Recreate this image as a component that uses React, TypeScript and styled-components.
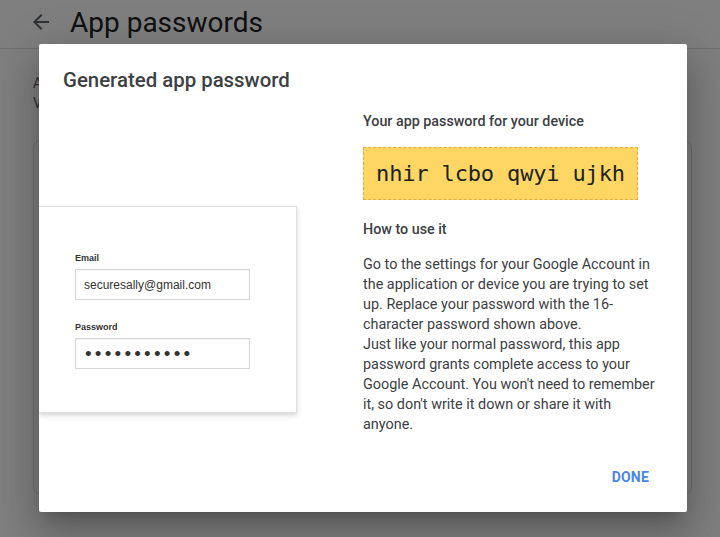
import React from "react";
import styled, { createGlobalStyle } from "styled-components";

const Global = createGlobalStyle`
  html, body { margin: 0; padding: 0; background: #fff; }
  body { font-family: Roboto, "Noto Sans", Arial, sans-serif; width: 720px; height: 537px; overflow: hidden; }
  * { box-sizing: border-box; }
`;

const Page = styled.div`
  width: 720px;
  height: 537px;
  position: relative;
  overflow: hidden;
`;

const Header = styled.header`
  height: 49px;
  display: flex;
  align-items: center;
  gap: 17px;
  padding: 0 0 4px 29px;
  border-bottom: 1px solid #dadce0;
`;

const HeaderTitle = styled.h1`
  margin: 0;
  font-size: 28px;
  font-weight: 400;
  color: #202124;
`;

const Content = styled.div`
  padding: 24px 28px 0 33px;
`;

const Intro = styled.p`
  margin: 0;
  font-size: 14px;
  line-height: 20px;
  color: #5f6368;
`;

const BgCard = styled.div`
  margin-top: 27px;
  height: 355px;
  width: 659px;
  border: 1px solid #dadce0;
  border-radius: 8px;
`;

const Overlay = styled.div`
  position: absolute;
  inset: 0;
  background: rgba(0, 0, 0, 0.5);
  padding: 44px 0 0 39px;
`;

const Dialog = styled.div`
  width: 648px;
  height: 468px;
  background: #fff;
  border-radius: 2px;
  overflow: hidden;
  display: flex;
  flex-direction: column;
  box-shadow: 0 11px 15px -7px rgba(0,0,0,.2), 0 24px 38px 3px rgba(0,0,0,.14), 0 9px 46px 8px rgba(0,0,0,.12);
`;

const DialogTitle = styled.h2`
  margin: 0;
  padding: 24px 24px 0;
  font-size: 20.4px;
  line-height: 24px;
  font-weight: 500;
  color: #3c4043;
`;

const Body = styled.div`
  display: grid;
  grid-template-columns: 324px 1fr;
  flex: 1;
`;

const Illustration = styled.div`
  margin-top: 114px;
  width: 258px;
  height: 207px;
  background: #fff;
  border: 1px solid #e0e0e0;
  border-left: none;
  box-shadow: 0 2px 4px rgba(0,0,0,0.12), 0 3px 8px rgba(0,0,0,0.06);
  padding: 45px 0 0 36px;
  font-family: "Liberation Sans", Arial, sans-serif;
`;

const FieldLabel = styled.div<{ $gap?: number }>`
  font-size: 9px;
  line-height: 12px;
  font-weight: 700;
  color: #333;
  margin-top: ${(p) => p.$gap ?? 0}px;
  margin-bottom: 5px;
`;

const FakeInput = styled.div`
  width: 175px;
  height: 31px;
  border: 1px solid #d6d6d6;
  box-shadow: inset 0 1px 1px rgba(0,0,0,0.04);
  display: flex;
  align-items: center;
  padding-left: 8px;
  font-size: 12px;
  color: #333;
`;

const Dots = styled.span`
  font-size: 19px;
  letter-spacing: 3.2px;
  color: #333;
  padding: 1px 0 0 1px;
`;

const Right = styled.div`
  padding: 19px 20px 0 0;
  display: flex;
  flex-direction: column;
`;

const Subhead = styled.div<{ $top?: number }>`
  font-size: 14.3px;
  line-height: 20px;
  font-weight: 500;
  color: #3c4043;
  margin-top: ${(p) => p.$top ?? 0}px;
`;

const PasswordBox = styled.div`
  margin-top: 16px;
  width: 275px;
  height: 53px;
  background: #fdd663;
  border: 1px dashed #d9b04a;
  display: flex;
  align-items: center;
  justify-content: center;
  font-family: "DejaVu Sans Mono", "Liberation Mono", monospace;
  font-size: 22px;
  color: #202124;
  letter-spacing: -0.15px;
`;

const Para = styled.p`
  margin: 16px 0 0;
  font-size: 14.4px;
  line-height: 20px;
  color: #3c4043;
  width: 298px;
`;

const Footer = styled.div`
  display: flex;
  justify-content: flex-end;
  padding: 0 30px 17px;
`;

const TextButton = styled.button`
  height: 36px;
  border: none;
  background: transparent;
  padding: 0 8px;
  font-family: Roboto, Arial, sans-serif;
  font-size: 14px;
  font-weight: 700;
  letter-spacing: 0.2px;
  color: #4a86e8;
  cursor: pointer;
`;

const BackIcon = () => (
  <svg width="24" height="24" viewBox="0 0 24 24" aria-hidden="true">
    <path d="M20 11H7.83l5.59-5.59L12 4l-8 8 8 8 1.41-1.41L7.83 13H20v-2z" fill="#5f6368" />
  </svg>
);

export default function App() {
  return (
    <>
      <Global />
      <Page>
        <Header>
          <BackIcon />
          <HeaderTitle>App passwords</HeaderTitle>
        </Header>
        <Content>
          <Intro>App passwords let you sign in</Intro>
          <Intro>Verification is required</Intro>
          <BgCard />
        </Content>
        <Overlay>
          <Dialog>
            <DialogTitle>Generated app password</DialogTitle>
            <Body>
              <div>
                <Illustration>
                  <FieldLabel>Email</FieldLabel>
                  <FakeInput>securesally@gmail.com</FakeInput>
                  <FieldLabel $gap={21}>Password</FieldLabel>
                  <FakeInput>
                    <Dots>•••••••••••</Dots>
                  </FakeInput>
                </Illustration>
              </div>
              <Right>
                <Subhead>Your app password for your device</Subhead>
                <PasswordBox>nhir lcbo qwyi ujkh</PasswordBox>
                <Subhead $top={19}>How to use it</Subhead>
                <Para>
                  Go to the settings for your Google Account in the application or device you are trying to set up. Replace your password with the 16-character password shown above.
                  <br />
                  Just like your normal password, this app password grants complete access to your Google Account. You won't need to remember it, so don't write it down or share it with anyone.
                </Para>
              </Right>
            </Body>
            <Footer>
              <TextButton>DONE</TextButton>
            </Footer>
          </Dialog>
        </Overlay>
      </Page>
    </>
  );
}
